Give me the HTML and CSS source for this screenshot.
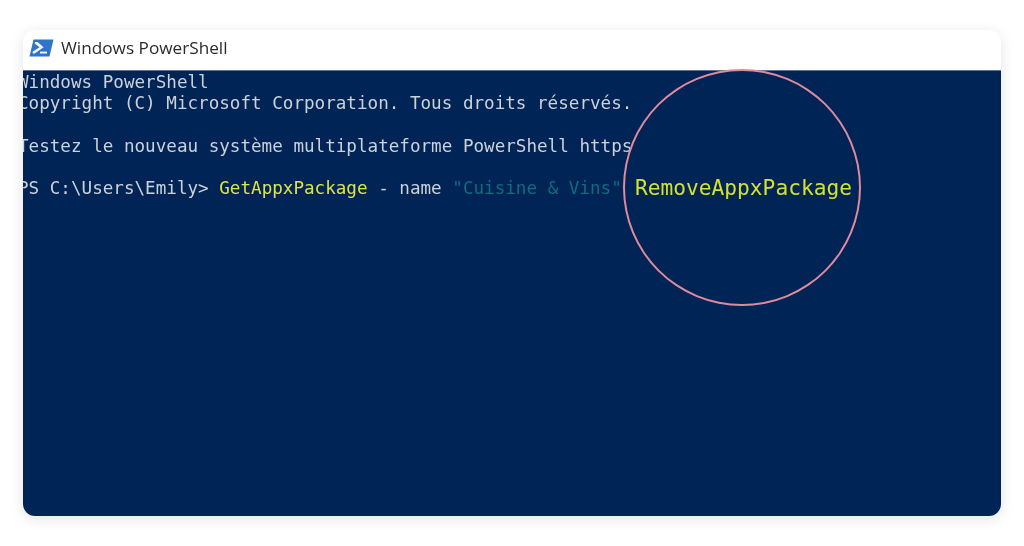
FILE: index.html
```html
<!DOCTYPE html>
<html lang="fr">
<head>
<meta charset="utf-8">
<title>Windows PowerShell</title>
<link rel="stylesheet" href="styles.css">
</head>
<body>
<main class="window">
  <header class="titlebar">
    <svg class="ps-icon" width="25" height="18" viewBox="0 0 25 18" aria-hidden="true">
      <polygon points="4.5,0.5 24.5,0.5 20.5,17.5 0.5,17.5" fill="#2f74c8"/>
      <polygon points="6,3 8.6,3 14.6,8.2 5.6,14.4 3.6,14.4 3.9,12.6 10.6,8.3 5.6,4.4" fill="#f2f6fb"/>
      <rect x="11" y="12.6" width="7" height="1.9" fill="#f2f6fb"/>
    </svg>
    <span class="title">Windows PowerShell</span>
  </header>
  <section class="console">
    <div class="output">
      <div class="line">Windows PowerShell</div>
      <div class="line">Copyright (C) Microsoft Corporation. Tous droits réservés.</div>
      <div class="line"> </div>
      <div class="line">Testez le nouveau système multiplateforme PowerShell https</div>
      <div class="line"> </div>
      <div class="line prompt"><span>PS C:\Users\Emily&gt;</span><span class="cmd">GetAppxPackage</span><span>- name</span><span class="str">"Cuisine &amp; Vins"</span></div>
    </div>
    <div class="lens"><span class="lens-text">RemoveAppxPackage</span></div>
  </section>
</main>
</body>
</html>
```
FILE: styles.css
```css
* { box-sizing: border-box; }
html, body { margin: 0; height: 100%; background: #fff; }
body { padding: 30px 23px; overflow: hidden; }
.window {
  height: 486px;
  display: flex;
  flex-direction: column;
  border-radius: 12px;
  overflow: hidden;
  background: #fff;
  box-shadow: 0 3px 14px rgba(40, 50, 70, 0.13);
}
.titlebar {
  flex: 0 0 40px;
  display: flex;
  align-items: center;
  gap: 7px;
  padding: 0 0 5px 6px;
}
.ps-icon { flex: none; filter: blur(0.4px); }
.title {
  font-family: "Open Sans", "Noto Sans", sans-serif;
  font-size: 17.2px;
  color: #2b2b2b;
  filter: blur(0.4px);
}
.console {
  flex: 1;
  position: relative;
  background: #012456;
  border-top: 1px solid #5c7299;
}
.output {
  margin-left: -5px;
  padding-top: 1px;
  font-family: "DejaVu Sans Mono", "Liberation Mono", monospace;
  font-size: 17.6px;
  line-height: 21.2px;
  color: #cdd1d8;
  filter: blur(0.45px);
}
.line { white-space: pre; height: 21.2px; }
.prompt { display: flex; gap: 10.6px; }
.cmd { color: #dfe63f; }
.str { color: #0e6c80; }
.lens {
  position: absolute;
  left: 600px;
  top: -2px;
  width: 238px;
  height: 237px;
  border-radius: 50%;
  border: 2.5px solid #e08a9e;
  background: #012456;
  display: flex;
  align-items: center;
  justify-content: center;
}
.lens-text {
  font-family: "DejaVu Sans Mono", "Liberation Mono", monospace;
  font-size: 21.2px;
  color: #d4e22c;
  filter: blur(0.4px);
  margin-left: 3px;
}
```
